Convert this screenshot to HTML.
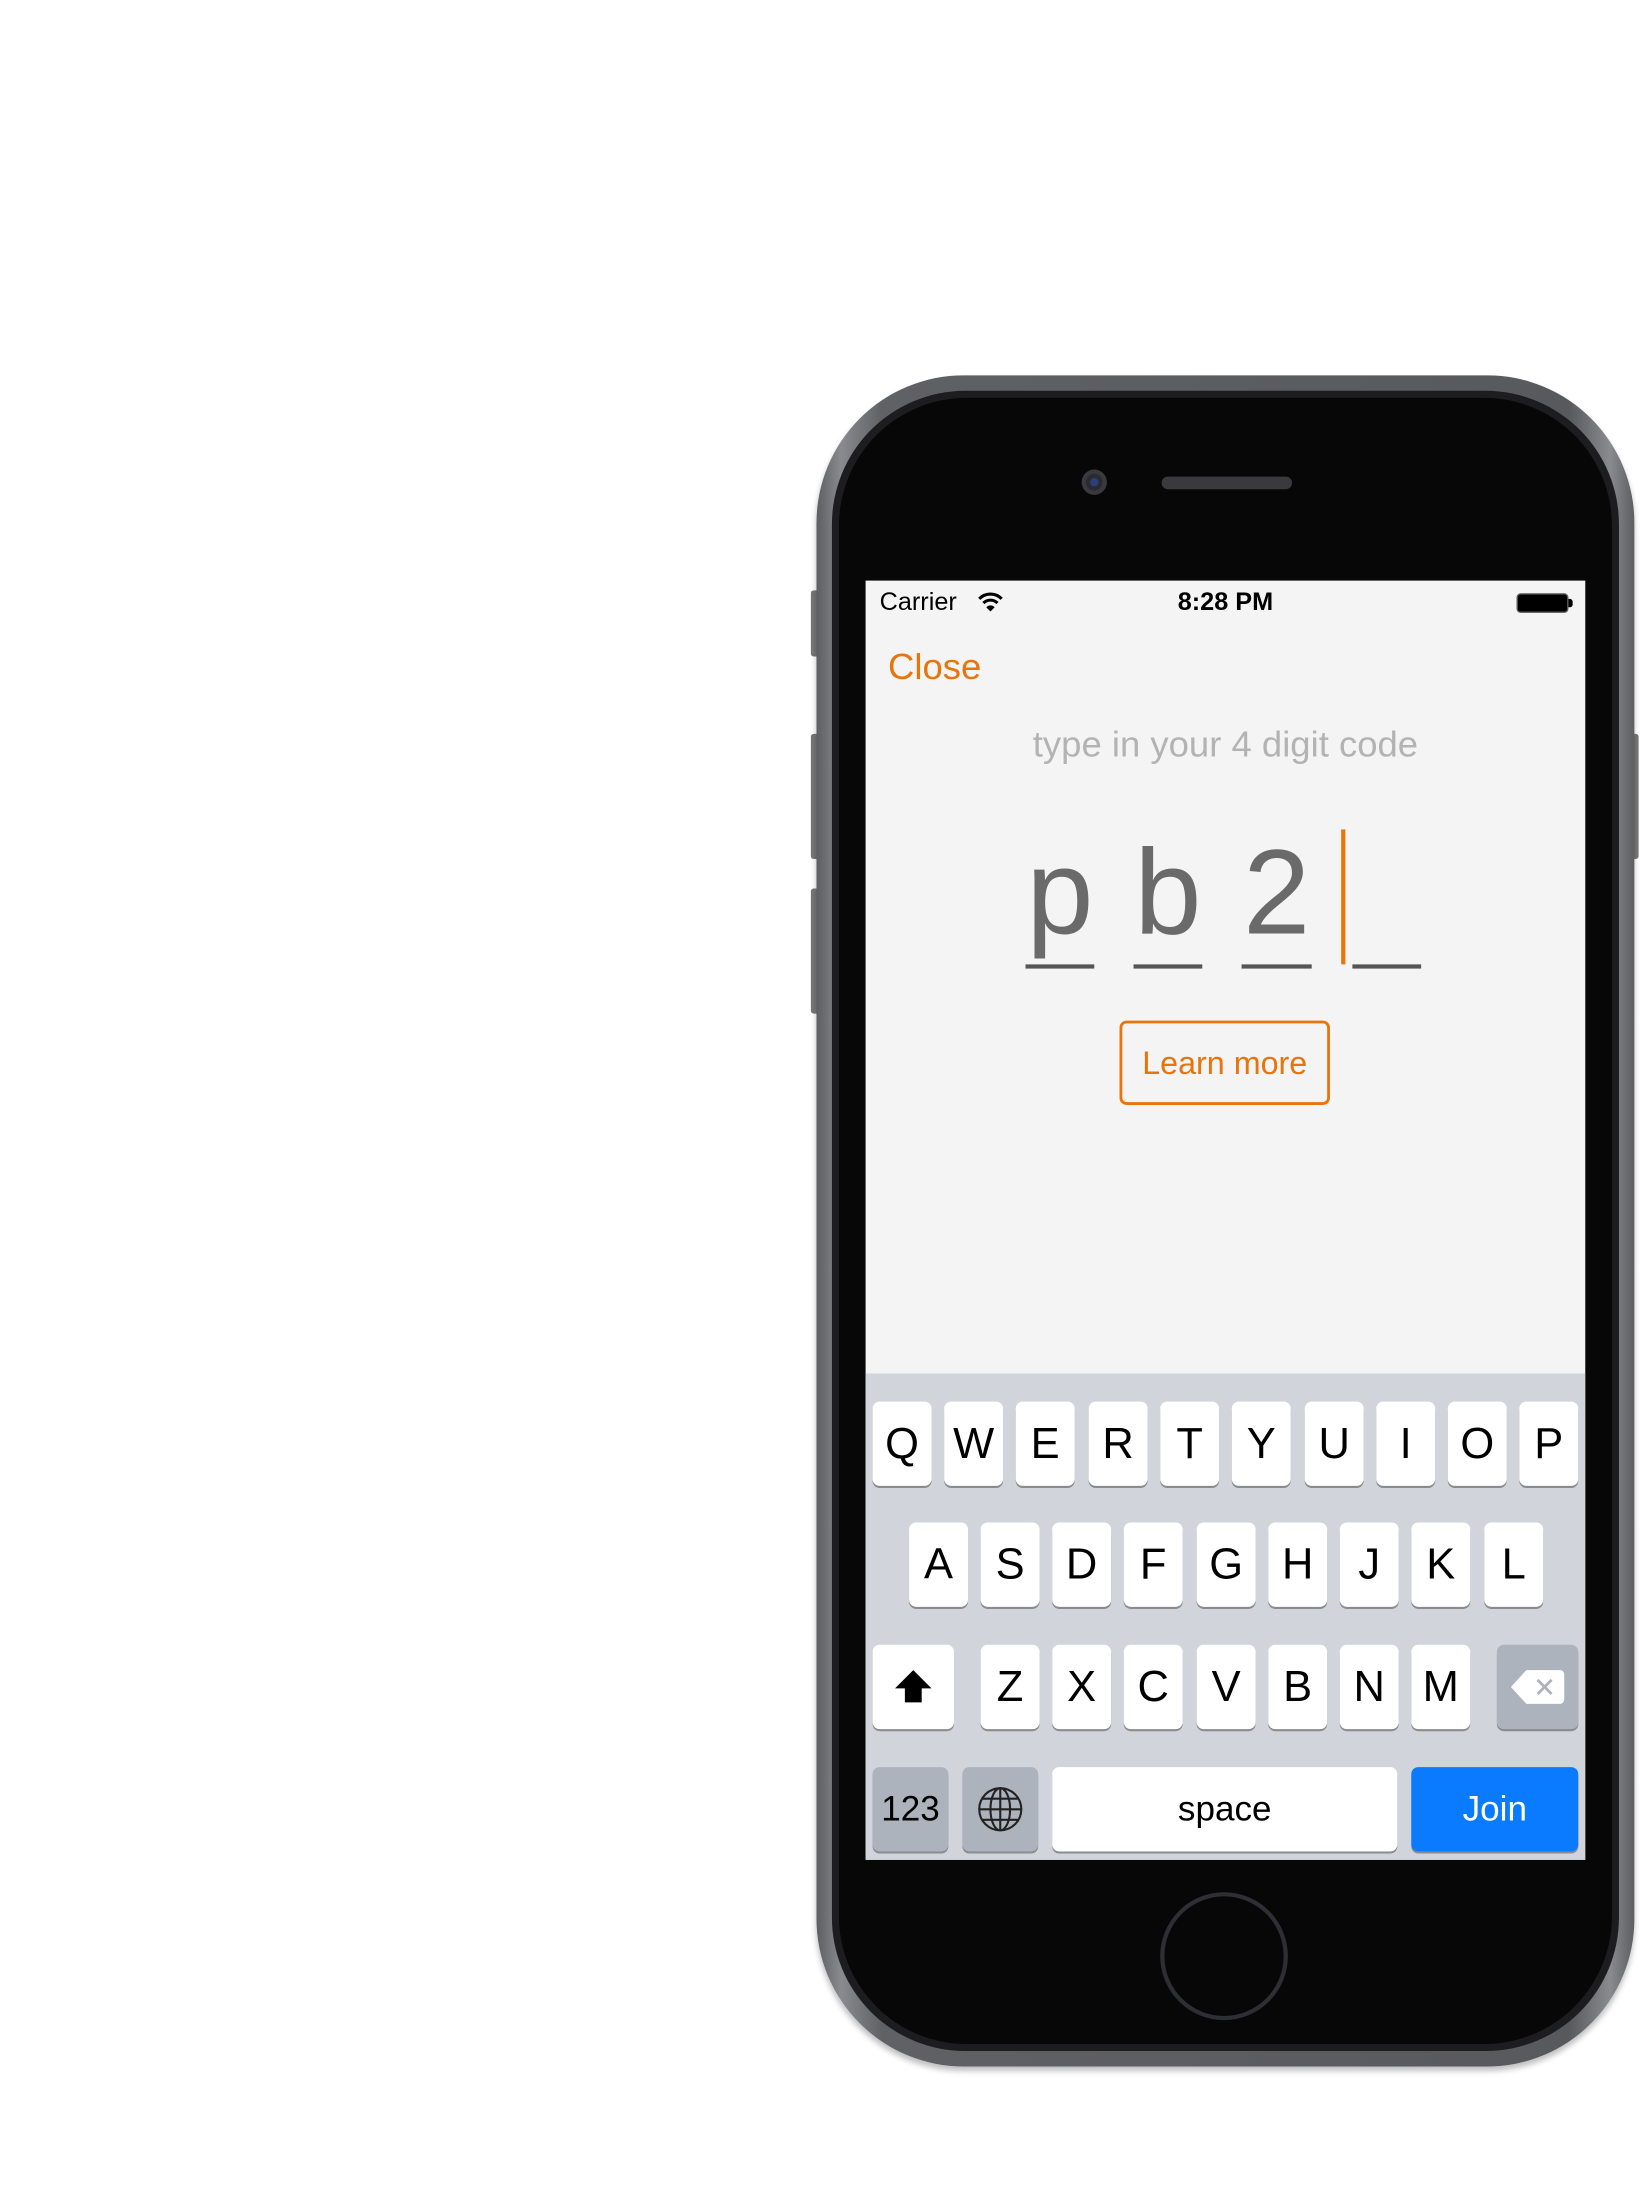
<!DOCTYPE html>
<html><head><meta charset="utf-8"><style>
*{margin:0;padding:0;box-sizing:border-box}
html,body{width:1640px;height:2200px;overflow:hidden;background:#fff;font-family:"Liberation Sans",sans-serif}
#w{position:absolute;left:0;top:0;width:1169px;height:1565px;transform-origin:0 0;transform:scale(1.4029,1.4058)}
.a{position:absolute}
.key{position:absolute;background:#fff;border-radius:5px;box-shadow:0 1.5px 0 #898b8f;font-size:31px;color:#000;text-align:center;line-height:60px;height:60px;width:42px}
.dk{background:#adb3bc}
.ch{position:absolute;top:172px;font-size:86px;color:#6a6a6a;line-height:100px;width:49px;text-align:center}
</style></head><body><div id="w">
<div class="a" style="left:578px;top:420px;width:6px;height:47px;background:#777;border-radius:2px"></div>
<div class="a" style="left:578px;top:522px;width:6px;height:89px;background:#777;border-radius:2px"></div>
<div class="a" style="left:578px;top:632px;width:6px;height:89px;background:#777;border-radius:2px"></div>
<div class="a" style="left:1162px;top:522px;width:6px;height:89px;background:#777;border-radius:2px"></div>
<div class="a" style="left:582px;top:267px;width:583px;height:1203px;border-radius:105px;background:linear-gradient(90deg,#5d5e61,#8a8b8e 3%,#606165 8%,#58595c 92%,#8a8b8e 97%,#5d5e61);box-shadow:0 3px 4px rgba(0,0,0,.25)"></div>
<div class="a" style="left:593px;top:278px;width:561px;height:1181px;border-radius:95px;background:#1d1d1f"></div>
<div class="a" style="left:598px;top:283px;width:551px;height:1171px;border-radius:91px;background:#070707"></div>
<div class="a" style="left:771px;top:334px;width:18px;height:18px;border-radius:50%;background:#2a2a30;box-shadow:inset 0 0 0 3px #3a3a3e"></div>
<div class="a" style="left:777px;top:340px;width:6px;height:6px;border-radius:50%;background:#2b3f7a"></div>
<div class="a" style="left:828px;top:339px;width:93px;height:9px;border-radius:5px;background:#3a3a3c"></div>
<div class="a" style="left:827px;top:1346px;width:91px;height:91px;border-radius:50%;border:3px solid #2e2f33"></div>
<div class="a" style="left:617px;top:413px;width:513px;height:910px;background:#f4f4f4;overflow:hidden">
  <div class="a" style="left:10px;top:5px;font-size:18px;color:#000">Carrier</div>
  <svg class="a" style="left:79px;top:7px" width="20" height="16" viewBox="0 0 20 16"><path d="M2 6a11 11 0 0 1 16 0" fill="none" stroke="#000" stroke-width="2.2"/><path d="M5 9a7 7 0 0 1 10 0" fill="none" stroke="#000" stroke-width="2.2"/><path d="M10 15l-3-3a4 4 0 0 1 6 0z" fill="#000"/></svg>
  <div class="a" style="left:0;width:513px;top:5px;text-align:center;font-size:18px;font-weight:bold;color:#000">8:28 PM</div>
  <div class="a" style="left:464px;top:9px;width:37px;height:14px;border:1.5px solid #555;border-radius:3px;background:#000"></div>
  <div class="a" style="left:501px;top:13px;width:3px;height:6px;background:#000;border-radius:0 2px 2px 0"></div>
  <div class="a" style="left:16px;top:46px;font-size:26px;color:#e8740c">Close</div>
  <div class="a" style="left:0;width:513px;top:101px;text-align:center;font-size:26px;color:#b3b3b3">type in your 4 digit code</div>
  <div class="ch" style="left:114px">p</div>
  <div class="ch" style="left:191px">b</div>
  <div class="ch" style="left:268px;width:50px">2</div>
  <div class="a" style="left:114px;top:273px;width:49px;height:3px;background:#555"></div>
  <div class="a" style="left:191px;top:273px;width:49px;height:3px;background:#555"></div>
  <div class="a" style="left:268px;top:273px;width:50px;height:3px;background:#555"></div>
  <div class="a" style="left:347px;top:273px;width:49px;height:3px;background:#555"></div>
  <div class="a" style="left:339px;top:177px;width:3px;height:96px;background:#e8740c"></div>
  <div class="a" style="left:181px;top:313px;width:150px;height:60px;border:2px solid #e8740c;border-radius:5px;text-align:center;line-height:56px;font-size:23px;color:#e8740c">Learn more</div>
  <div class="a" style="left:0;top:564px;width:513px;height:346px;background:#d1d5db"></div>
</div>
<div class="key" style="left:622px;top:997px">Q</div><div class="key" style="left:673px;top:997px">W</div><div class="key" style="left:724px;top:997px">E</div><div class="key" style="left:776px;top:997px">R</div><div class="key" style="left:827px;top:997px">T</div><div class="key" style="left:878px;top:997px">Y</div><div class="key" style="left:930px;top:997px">U</div><div class="key" style="left:981px;top:997px">I</div><div class="key" style="left:1032px;top:997px">O</div><div class="key" style="left:1083px;top:997px">P</div>
<div class="key" style="left:648px;top:1083px">A</div><div class="key" style="left:699px;top:1083px">S</div><div class="key" style="left:750px;top:1083px">D</div><div class="key" style="left:801px;top:1083px">F</div><div class="key" style="left:853px;top:1083px">G</div><div class="key" style="left:904px;top:1083px">H</div><div class="key" style="left:955px;top:1083px">J</div><div class="key" style="left:1006px;top:1083px">K</div><div class="key" style="left:1058px;top:1083px">L</div>
<div class="key" style="left:622px;top:1170px;width:58px"><svg width="30" height="28" viewBox="0 0 30 28" style="margin-top:16px"><path d="M15 2L2 15h7v10h12V15h7z" fill="#000"/></svg></div>
<div class="key" style="left:699px;top:1170px">Z</div><div class="key" style="left:750px;top:1170px">X</div><div class="key" style="left:801px;top:1170px">C</div><div class="key" style="left:853px;top:1170px">V</div><div class="key" style="left:904px;top:1170px">B</div><div class="key" style="left:955px;top:1170px">N</div><div class="key" style="left:1006px;top:1170px">M</div>
<div class="key dk" style="left:1067px;top:1170px;width:58px"><svg width="40" height="26" viewBox="0 0 40 26" style="margin-top:17px"><path d="M12 1h24a3 3 0 0 1 3 3v18a3 3 0 0 1-3 3H12L1 13z" fill="#fff"/><path d="M20 8l10 10M30 8L20 18" stroke="#adb3bc" stroke-width="2"/></svg></div>
<div class="key dk" style="left:622px;top:1257px;width:54px;font-size:25px">123</div>
<div class="key dk" style="left:686px;top:1257px;width:54px"><svg width="34" height="34" viewBox="0 0 34 34" style="margin-top:13px" fill="none" stroke="#222" stroke-width="1.5"><circle cx="17" cy="17" r="15"/><ellipse cx="17" cy="17" rx="7" ry="15"/><path d="M17 2v30M2 17h30M4.5 9.5h25M4.5 24.5h25"/></svg></div>
<div class="key" style="left:750px;top:1257px;width:246px;font-size:25px">space</div>
<div class="key" style="left:1006px;top:1257px;width:119px;background:#0a7bfe;color:#fff;font-size:25px">Join</div>
</div></body></html>
